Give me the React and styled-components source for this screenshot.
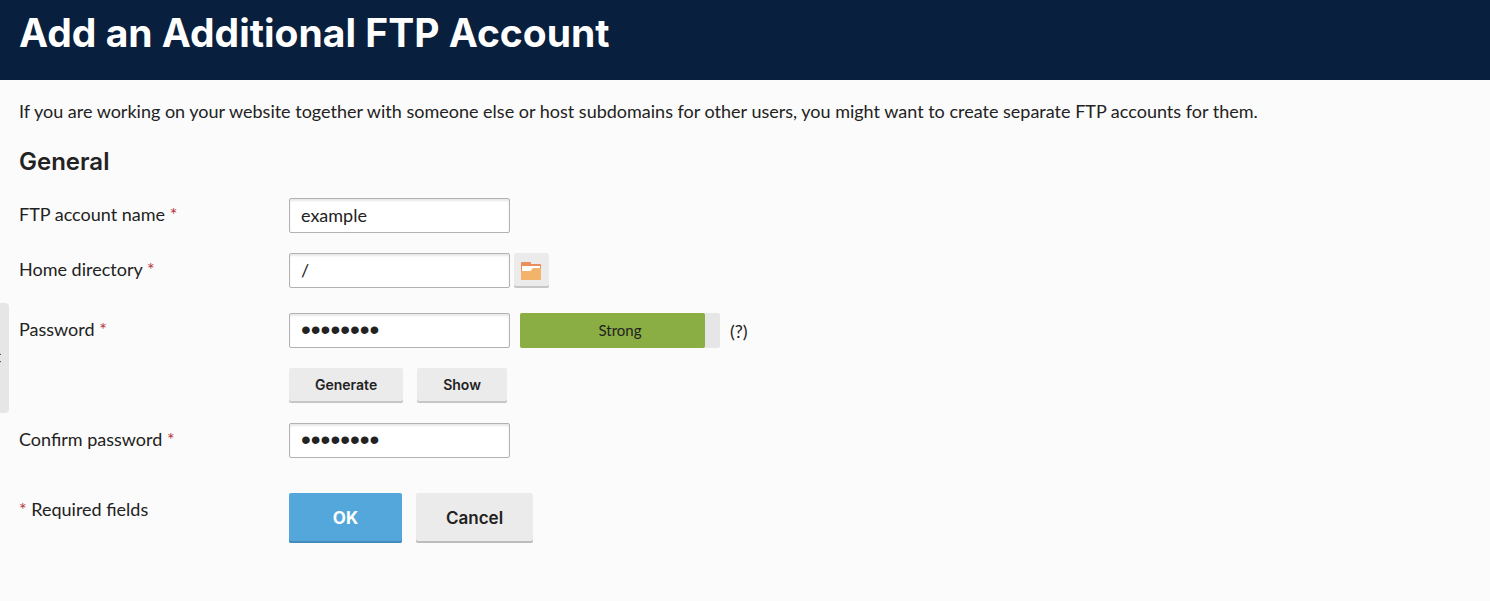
import { useState } from 'react';
import styled, { createGlobalStyle } from 'styled-components';

const headingFont = "Inter, 'Liberation Sans', sans-serif";

const GlobalStyle = createGlobalStyle`
  * {
    box-sizing: border-box;
  }

  body {
    margin: 0;
    background-color: #fbfbfb;
    color: #222;
    font-family: Lato, 'Liberation Sans', sans-serif;
    font-size: 18px;
    line-height: 24px;
  }

  button,
  input {
    font: inherit;
    color: inherit;
  }
`;

const Header = styled.header`
  height: 80px;
  padding: 8px 19px;
  background-color: #081f3d;
`;

const Title = styled.h1`
  margin: 0;
  color: #fff;
  font-family: ${headingFont};
  font-size: 39px;
  font-weight: 700;
  line-height: 50px;
`;

const Content = styled.main`
  padding: 19px;
`;

const Intro = styled.p`
  margin: 0 0 23px;
`;

const SectionTitle = styled.h2`
  margin: 0 0 20px;
  font-family: ${headingFont};
  font-size: 24px;
  font-weight: 600;
  line-height: 32px;
`;

const Row = styled.div`
  display: grid;
  grid-template-columns: 270px 1fr;
  margin-bottom: ${({ $gap }) => $gap || 20}px;
`;

const Label = styled.label`
  padding-top: 4px;
`;

const Note = styled.div`
  padding-top: 4px;
`;

const Asterisk = styled.span`
  color: #b8323e;
`;

const Controls = styled.div`
  display: flex;
  align-items: center;
  gap: ${({ $gap }) => $gap || 4}px;
`;

const Input = styled.input`
  width: 221px;
  height: 35px;
  padding: 0 11px 2px;
  background-color: #fff;
  border: 1px solid #b2b2b2;
  border-radius: 2px;
  box-shadow: inset 0 2px 2px #e8e8e8;

  &[type='password'] {
    font-family: 'Liberation Sans', sans-serif;
    font-size: 28px;
  }
`;

const Button = styled.button`
  height: 35px;
  padding: 0 26px 2px;
  background-color: #ebebeb;
  border: 0;
  border-radius: 2px;
  box-shadow: inset 0 -2px 0 #c6c6c6;
  font-family: ${headingFont};
  font-size: 14px;
  font-weight: 600;
  cursor: pointer;
`;

const IconButton = styled(Button)`
  display: flex;
  align-items: center;
  justify-content: center;
  width: 35px;
  padding: 0 1px 0 0;
`;

const LargeButton = styled(Button)`
  min-width: 113px;
  height: 50px;
  padding: 0 30px;
  box-shadow: inset 0 -2px 0 #bdbdbd;
  font-size: 17px;
`;

const PrimaryButton = styled(LargeButton)`
  background-color: #53a7da;
  box-shadow: inset 0 -2px 0 #438bb8;
  color: #fff;
  font-weight: 700;
`;

const Meter = styled.div`
  display: grid;
  width: 200px;
  height: 35px;
  margin-left: 6px;
  background-color: #e6e6e6;
  border-radius: 2px;
`;

const MeterBar = styled.div`
  grid-area: 1 / 1;
  background-color: #8aae43;
  border-radius: 2px;
`;

const MeterText = styled.span`
  grid-area: 1 / 1;
  font-size: 15px;
  line-height: 34px;
  text-align: center;
`;

const Hint = styled.a`
  margin-left: 6px;
  color: inherit;
  text-decoration: none;
`;

const SidebarToggle = styled.button`
  position: fixed;
  top: 303px;
  left: 0;
  width: 9px;
  height: 110px;
  padding: 0;
  overflow: hidden;
  background-color: #e6e6e6;
  border: 0;
  border-radius: 0 4px 4px 0;

  svg {
    display: block;
  }
`;

function FolderIcon() {
  return (
    <svg width="20" height="18" viewBox="0 0 20 18" aria-hidden="true">
      <path d="M0 1Q0 0 1 0H9Q10 0 10 1V2H19Q20 2 20 3V14H0Z" fill="#ea8f5b" />
      <path d="M1 4H19V12H1Z" fill="#fff" />
      <path d="M0 9H9Q10 9 10.500 8L11 7Q11.500 6 12.500 6H20V17Q20 18 19 18H1Q0 18 0 17Z" fill="#f4b36b" />
    </svg>
  );
}

function RequiredLabel({ htmlFor, children }) {
  return (
    <Label htmlFor={htmlFor}>
      {children} <Asterisk>*</Asterisk>
    </Label>
  );
}

function App() {
  const [visible, setVisible] = useState(false);
  const [strength] = useState(92.5);
  const passwordType = visible ? 'text' : 'password';

  return (
    <>
      <GlobalStyle />
      <Header>
        <Title>Add an Additional FTP Account</Title>
      </Header>
      <SidebarToggle type="button" aria-label="Toggle sidebar">
        <svg width="9" height="12" viewBox="0 0 9 12" aria-hidden="true">
          <path d="M1 2L-4 6L1 10" fill="none" stroke="#444" strokeWidth="1" />
        </svg>
      </SidebarToggle>
      <Content>
        <Intro>
          If you are working on your website together with someone else or host subdomains for other
          users, you might want to create separate FTP accounts for them.
        </Intro>
        <SectionTitle>General</SectionTitle>
        <form onSubmit={(e) => e.preventDefault()}>
          <Row>
            <RequiredLabel htmlFor="name">FTP account name</RequiredLabel>
            <Controls>
              <Input id="name" type="text" defaultValue="example" />
            </Controls>
          </Row>
          <Row $gap={25}>
            <RequiredLabel htmlFor="directory">Home directory</RequiredLabel>
            <Controls>
              <Input id="directory" type="text" defaultValue="/" />
              <IconButton type="button" aria-label="Browse">
                <FolderIcon />
              </IconButton>
            </Controls>
          </Row>
          <Row>
            <RequiredLabel htmlFor="password">Password</RequiredLabel>
            <Controls>
              <Input id="password" type={passwordType} defaultValue="examples" />
              <Meter>
                <MeterBar style={{ width: `${strength}%` }} />
                <MeterText>Strong</MeterText>
              </Meter>
              <Hint href="#strength">(?)</Hint>
            </Controls>
          </Row>
          <Row>
            <div />
            <Controls $gap={14}>
              <Button type="button">Generate</Button>
              <Button type="button" onClick={() => setVisible(!visible)}>
                Show
              </Button>
            </Controls>
          </Row>
          <Row $gap={35}>
            <RequiredLabel htmlFor="confirm">Confirm password</RequiredLabel>
            <Controls>
              <Input id="confirm" type={passwordType} defaultValue="examples" />
            </Controls>
          </Row>
          <Row>
            <Note>
              <Asterisk>*</Asterisk> Required fields
            </Note>
            <Controls $gap={14}>
              <PrimaryButton type="submit">OK</PrimaryButton>
              <LargeButton type="button">Cancel</LargeButton>
            </Controls>
          </Row>
        </form>
      </Content>
    </>
  );
}

export default App;
